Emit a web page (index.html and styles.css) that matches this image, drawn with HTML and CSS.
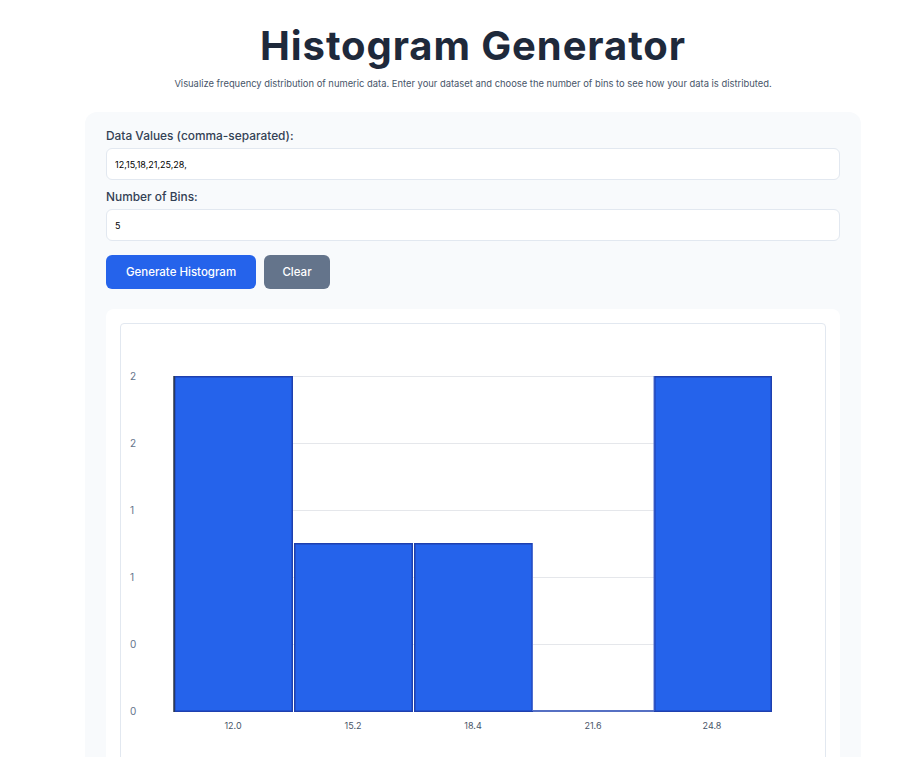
FILE: index.html
```html
<!DOCTYPE html>
<html lang="en">
<head>
<meta charset="utf-8">
<title>Histogram Generator</title>
<link rel="stylesheet" href="styles.css">
</head>
<body>
<div class="page">
  <header class="head">
    <h1 class="title">Histogram Generator</h1>
    <p class="subtitle">Visualize frequency distribution of numeric data. Enter your dataset and choose the number of bins to see how your data is distributed.</p>
  </header>
  <section class="card">
    <label class="label" for="data">Data Values (comma-separated):</label>
    <input class="field" id="data" type="text" value="12,15,18,21,25,28,">
    <label class="label label-second" for="bins">Number of Bins:</label>
    <input class="field" id="bins" type="text" value="5">
    <div class="actions">
      <button class="btn btn-primary">Generate Histogram</button>
      <button class="btn btn-muted">Clear</button>
    </div>
    <div class="chart-box">
      <div class="chart-frame">
        <svg class="chart" width="704" height="440" viewBox="0 0 704 440" xmlns="http://www.w3.org/2000/svg">
          <g class="grid" stroke="#e5e7eb" stroke-width="1">
            <line x1="53" y1="52.5" x2="650" y2="52.5"/>
            <line x1="53" y1="119.5" x2="650" y2="119.5"/>
            <line x1="53" y1="186.5" x2="650" y2="186.5"/>
            <line x1="53" y1="253.5" x2="650" y2="253.5"/>
            <line x1="53" y1="320.5" x2="650" y2="320.5"/>
          </g>
          <g font-family="Inter, 'Noto Sans', sans-serif" font-size="10" fill="#64748b">
            <text x="9" y="56">2</text>
            <text x="9" y="123">2</text>
            <text x="9" y="190">1</text>
            <text x="9" y="257">1</text>
            <text x="9" y="324">0</text>
            <text x="9" y="391">0</text>
          </g>
          <g fill="#2563eb" stroke="#1e40af" stroke-width="1.5">
            <rect x="53.75" y="52.75" width="117.5" height="334.5"/>
            <rect x="173.75" y="219.75" width="117.5" height="167.5"/>
            <rect x="293.75" y="219.75" width="117.5" height="167.5"/>
            <rect x="533.75" y="52.75" width="116.5" height="334.5"/>
          </g>
          <line x1="411" y1="387" x2="533" y2="387" stroke="#1e40af" stroke-width="1.5"/>
          <line x1="411.5" y1="219" x2="411.5" y2="387" stroke="#4f6fd0" stroke-width="1"/>
          <line x1="533" y1="52" x2="533" y2="387" stroke="#4f6fd0" stroke-width="1"/>
          <line x1="53" y1="52" x2="53" y2="388" stroke="#2d3748" stroke-width="1.5"/>
          <g font-family="Inter, 'Noto Sans', sans-serif" font-size="9" fill="#475569" text-anchor="middle">
            <text x="112" y="405">12.0</text>
            <text x="232" y="405">15.2</text>
            <text x="352" y="405">18.4</text>
            <text x="472" y="405">21.6</text>
            <text x="591" y="405">24.8</text>
          </g>
        </svg>
      </div>
    </div>
  </section>
</div>
</body>
</html>
```
FILE: styles.css
```css
* { box-sizing: border-box; }
html, body { margin: 0; padding: 0; background: #ffffff; }
body {
  font-family: Inter, "Noto Sans", sans-serif;
  color: #1e293b;
}
.page {
  width: 776px;
  margin-left: 85px;
  padding-top: 22px;
}
.head {
  display: flex;
  flex-direction: column;
  align-items: center;
}
.title {
  margin: 0;
  font-size: 40px;
  line-height: 48px;
  font-weight: 700;
  color: #1e293b;
  letter-spacing: 0.9px;
}
.subtitle {
  margin: 7px 0 0;
  font-size: 9.4px;
  line-height: 14px;
  color: #475569;
}
.card {
  margin-top: 21px;
  background: #f8fafc;
  border-radius: 12px;
  padding: 16px 21px 40px;
  display: flex;
  flex-direction: column;
}
.label {
  font-size: 11.9px;
  line-height: 16px;
  font-weight: 500;
  color: #334155;
  margin-bottom: 4px;
}
.label-second { margin-top: 9px; }
.field {
  height: 32px;
  border: 1px solid #e2e8f0;
  border-radius: 6px;
  background: #ffffff;
  padding: 0 8px;
  font-family: Inter, "Noto Sans", sans-serif;
  font-size: 9px;
  color: #000000;
  outline: none;
}
.actions {
  display: flex;
  gap: 8px;
  margin-top: 14px;
}
.btn {
  height: 34px;
  border: none;
  border-radius: 6px;
  font-family: Inter, "Noto Sans", sans-serif;
  font-size: 11.5px;
  font-weight: 500;
  color: #ffffff;
  padding: 0;
}
.btn-primary { background: #2563eb; width: 150px; }
.btn-muted { background: #64748b; width: 66px; }
.chart-box {
  margin-top: 20px;
  background: #ffffff;
  border-radius: 8px;
  padding: 14px 14px 14px;
}
.chart-frame {
  border: 1px solid #e2e8f0;
  border-radius: 4px;
  display: flex;
}
.chart { display: block; }
```
